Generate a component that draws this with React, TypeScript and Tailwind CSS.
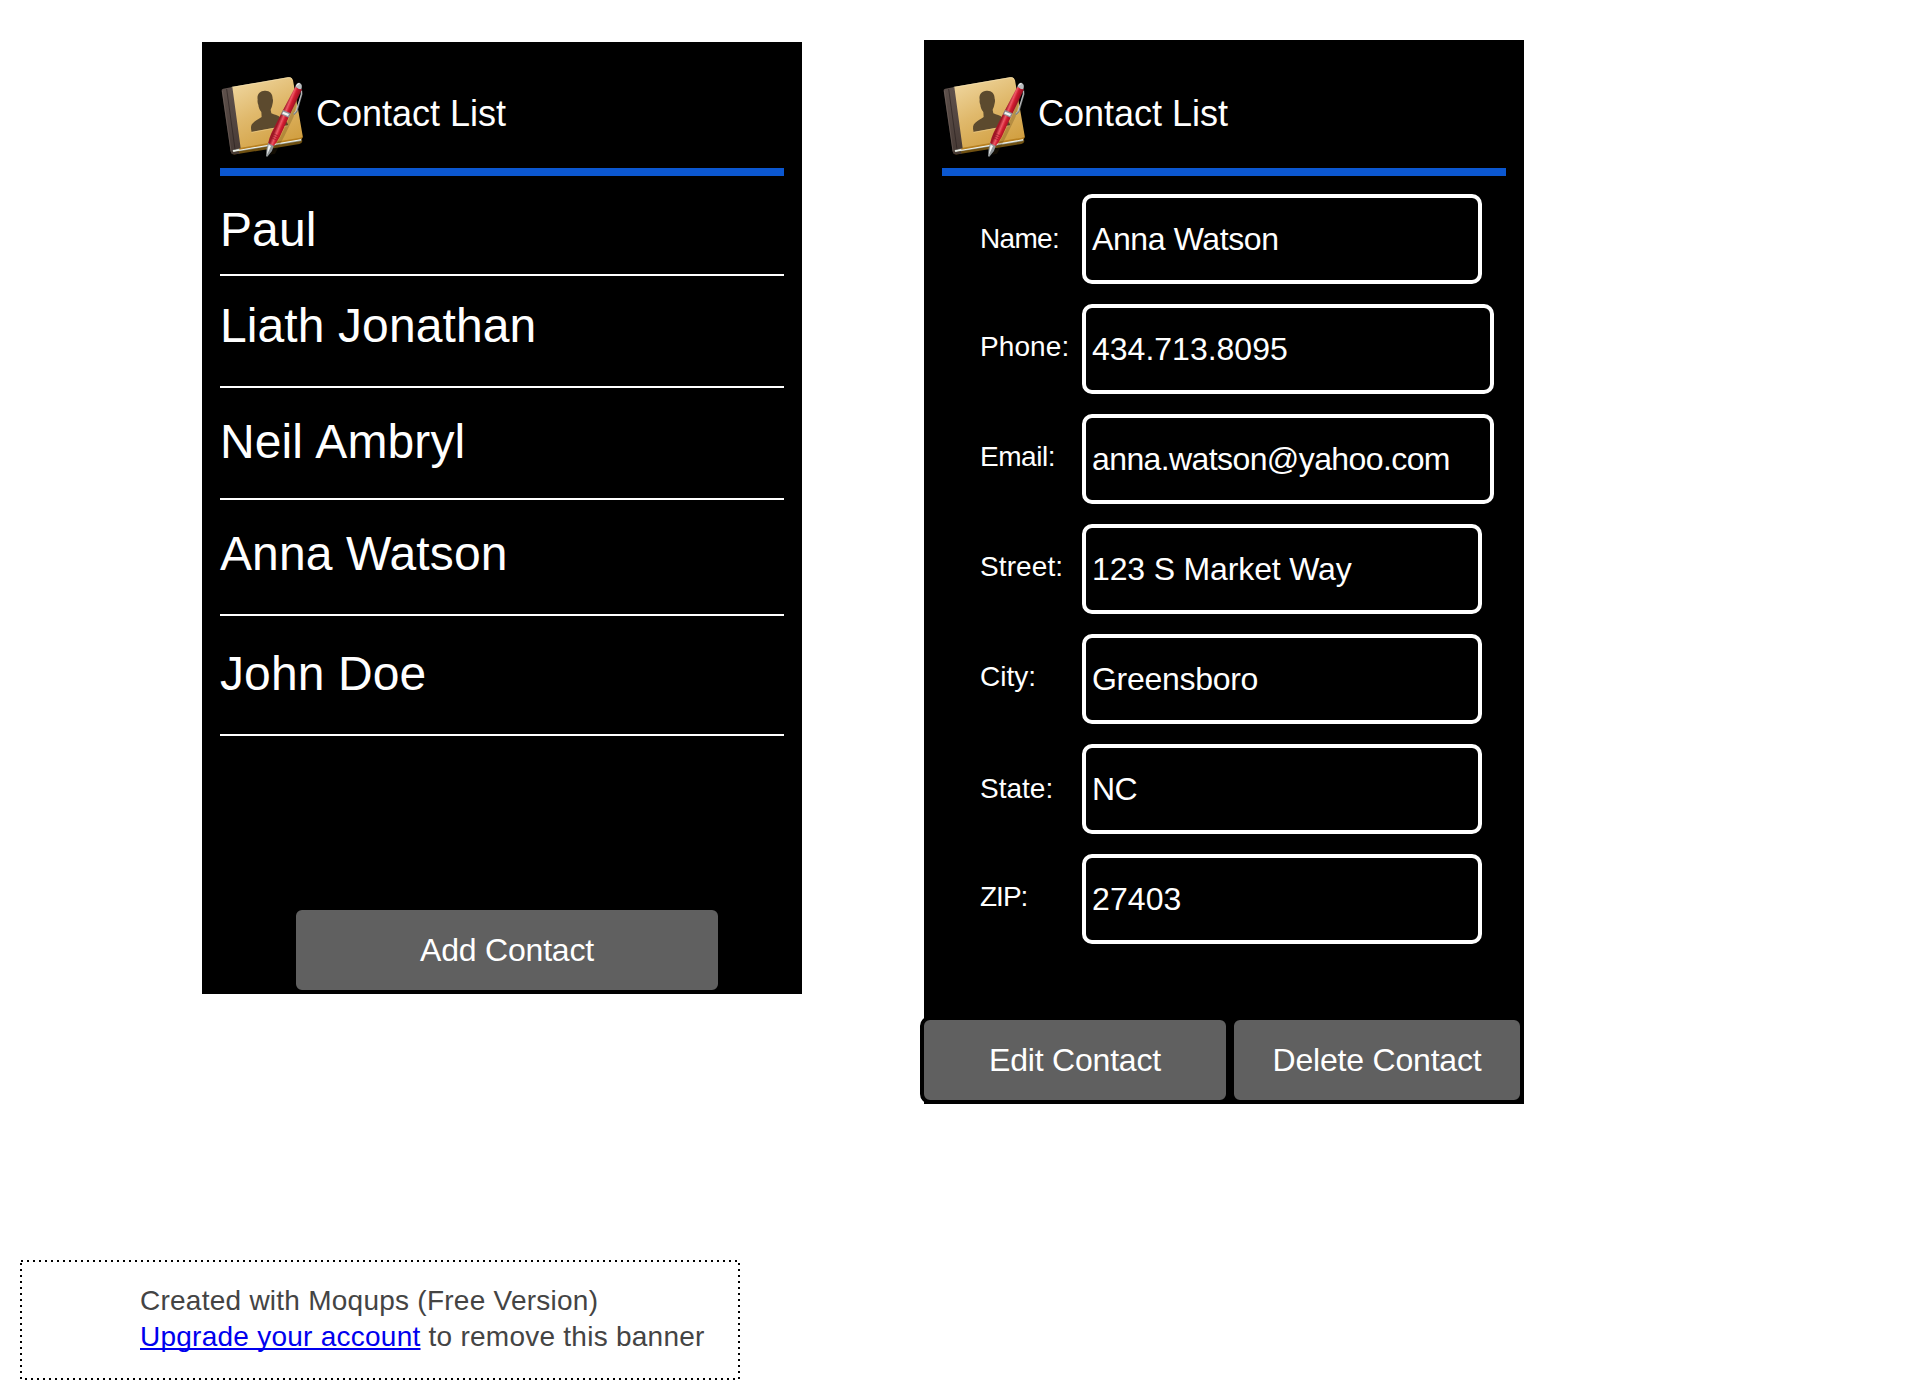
const contacts = [
  { name: "Paul", row: "h-[100px] pt-[27px]" },
  { name: "Liath Jonathan", row: "h-[112px] pt-[23px]" },
  { name: "Neil Ambryl", row: "h-[112px] pt-[27px] [word-spacing:1.5px]" },
  { name: "Anna Watson", row: "h-[116px] pt-[27px]" },
  { name: "John Doe", row: "h-[120px] pt-[31px]" },
];

const fields = [
  {
    label: "Name:",
    value: "Anna Watson",
    box: "w-[400px] tracking-[-0.4px]",
    caption: "pt-[29px] tracking-[-0.7px]",
  },
  { label: "Phone:", value: "434.713.8095", box: "w-[412px]", caption: "pt-[27px] tracking-[0.1px]" },
  {
    label: "Email:",
    value: "anna.watson@yahoo.com",
    box: "w-[412px] tracking-[-0.6px]",
    caption: "pt-[27px] tracking-[-0.45px]",
  },
  {
    label: "Street:",
    value: "123 S Market Way",
    box: "w-[400px] tracking-[-0.15px]",
    caption: "pt-[27px] tracking-[0.1px]",
  },
  { label: "City:", value: "Greensboro", box: "w-[400px] tracking-[-0.3px]", caption: "pt-[27px]" },
  { label: "State:", value: "NC", box: "w-[400px] tracking-[-0.6px]", caption: "pt-[29px]" },
  { label: "ZIP:", value: "27403", box: "w-[400px] tracking-[0.1px]", caption: "pt-[27px] tracking-[-1px]" },
];

function AddressBookIcon({ id }: { id: string }) {
  const cover = `cover-${id}`;
  const spine = `spine-${id}`;
  const pen = `pen-${id}`;
  return (
    <svg width="88" height="88" viewBox="60 42 264 264" className="shrink-0" aria-hidden="true">
      <defs>
        <linearGradient id={cover} x1="0.1" y1="0" x2="0.6" y2="1">
          <stop offset="0" stopColor="#f0d8a2" />
          <stop offset="0.5" stopColor="#e0b96c" />
          <stop offset="1" stopColor="#d2a042" />
        </linearGradient>
        <linearGradient id={spine} x1="0" y1="0" x2="0" y2="1">
          <stop offset="0" stopColor="#5e514c" />
          <stop offset="1" stopColor="#463934" />
        </linearGradient>
        <linearGradient id={pen} gradientUnits="userSpaceOnUse" x1="242" y1="170" x2="266" y2="180">
          <stop offset="0" stopColor="#a01626" />
          <stop offset="0.3" stopColor="#ee5a66" />
          <stop offset="0.55" stopColor="#d01c30" />
          <stop offset="1" stopColor="#9a1022" />
        </linearGradient>
      </defs>
      <path d="M92 272 L304 232 L307 244 Q306 250 298 252 L108 283 Q96 285 94 278Z" fill="#6f5011" />
      <path d="M94 267 L304 230 L304 243 L98 277Z" fill="#9ba19a" />
      <path d="M98 271 L303 235 L303 241 L100 275Z" fill="#eef1e9" />
      <path d="M94 81 L264 52 Q275 49 279 61 L308 227 Q309 234 301 236 L118 267Z" fill={`url(#${cover})`} />
      <path d="M118 264 L300 233 Q307 231 308 227 Q311 235 301 238 L118 269Z" fill="#b88020" />
      <path d="M96 82 L264 53 Q272 51 276 58" fill="none" stroke="#f6e3b2" strokeWidth="2" />
      <path d="M65 92 Q64 87 70 86 L97 81 L122 265 L98 270 L99 277 L117 274 L119 281 L100 283 Q94 283 92 275Z" fill={`url(#${spine})`} />
      <path d="M80 87 L105 268" stroke="#2a211f" strokeWidth="2" />
      <path d="M67 92 L93 274" stroke="#796b65" strokeWidth="1.5" />
      <path
        d="M173 119 C170 102 180 93 194 92 C208 91 218 99 218 116 C220 119 219 128 217 134 C216 142 212 146 212 150 L214 160 C223 164 234 166 242 173 C256 180 262 185 265 196 L155 216 C151 202 153 193 160 188 C168 180 179 176 185 171 L184 156 C178 149 176 142 175 134 C173 130 172 123 173 119Z"
        fill="#5c4a2e"
      />
      <path d="M155 217 L265 197" stroke="#f0cf8b" strokeWidth="2" />
      <path d="M302 82 L271 166 L242 229 L223 262 L210 284 L225 281 L253 229 L281 170Z" fill="#4b350d" opacity="0.25" />
      <path d="M304 92 L305 102 L290 154 L281 163" fill="none" stroke="#777b7c" strokeWidth="5" strokeLinejoin="round" />
      <path d="M304 92 L304 103 L288 154 L281 161" fill="none" stroke="#e5e7e8" strokeWidth="2" strokeLinejoin="round" />
      <path d="M286 80 L306 88 L269 166 L239 231 Q231 247 220 259 L204 251 Q207 236 214 220 L246 156Z" fill={`url(#${pen})`} />
      <path d="M286 80 Q289 68 298 68 Q309 72 304 88 Q296 88 286 80Z" fill="#b9bdbf" />
      <path d="M290 77 Q293 71 298 71" fill="none" stroke="#ffffff" strokeWidth="3" />
      <path d="M249 150 L272 160 L266 173 L243 163Z" fill="#8e9295" />
      <path d="M250 155 L267 162 L264 168 L247 161Z" fill="#f3f4f4" />
      <path d="M217 220 L235 228 M214 226 L232 234 M212 232 L229 240" stroke="#8f1422" strokeWidth="2" />
      <path d="M204 249 L221 258 L216 273 L202 290 L198 289 L200 266Z" fill="#8f9597" />
      <path d="M206 254 L213 258 L201 284 L203 268Z" fill="#f4f6f6" />
    </svg>
  );
}

function PanelHeader({ id }: { id: string }) {
  return (
    <header className="flex h-[102px] w-[564px] items-start border-b-8 border-[#0b57d0]">
      <AddressBookIcon id={id} />
      <h1 className="ml-2 mt-[19px] text-[36px] leading-[41px] whitespace-nowrap">Contact List</h1>
    </header>
  );
}

function ActionButton({ label, className }: { label: string; className: string }) {
  return (
    <button
      type="button"
      className={`h-[88px] shrink-0 rounded-[10px] border-4 border-black bg-[#606060] text-center text-[32px] leading-9 tracking-[-0.2px] whitespace-nowrap text-white ${className}`}
    >
      {label}
    </button>
  );
}

function ContactListPanel() {
  return (
    <section className="mt-[2px] flex h-[952px] w-[600px] flex-col bg-black pt-8 text-white">
      <div className="ml-[18px]">
        <PanelHeader id="list" />
        <ul className="w-[564px]">
          {contacts.map((contact) => (
            <li
              key={contact.name}
              className={`border-b-2 border-white text-[48px] leading-[53px] tracking-[0.1px] whitespace-nowrap ${contact.row}`}
            >
              {contact.name}
            </li>
          ))}
        </ul>
      </div>
      <ActionButton label="Add Contact" className="mt-auto ml-[90px] w-[430px]" />
    </section>
  );
}

function ContactDetailPanel() {
  return (
    <section className="flex h-[1064px] w-[600px] flex-col bg-black pt-[34px] text-white">
      <div className="ml-[18px]">
        <PanelHeader id="detail" />
      </div>
      <div className="mt-[18px] ml-14 flex flex-col gap-5">
        {fields.map((field) => (
          <div key={field.label} className="flex h-[90px] items-start">
            <span className={`w-[102px] text-[28px] leading-[31px] whitespace-nowrap ${field.caption}`}>
              {field.label}
            </span>
            <div
              className={`flex h-[90px] items-center rounded-[10px] border-4 border-white pl-[6px] text-[32px] leading-9 whitespace-nowrap ${field.box}`}
            >
              {field.value}
            </div>
          </div>
        ))}
      </div>
      <div className="mt-auto -ml-1 flex w-[604px]">
        <ActionButton label="Edit Contact" className="w-[310px]" />
        <ActionButton label="Delete Contact" className="w-[294px]" />
      </div>
    </section>
  );
}

function Banner() {
  return (
    <footer className="relative mt-[156px] ml-5 h-[120px] w-[720px] pt-[23px] pl-[120px] text-[28px] leading-9 tracking-[0.25px] whitespace-nowrap text-[#444444]">
      <svg className="pointer-events-none absolute inset-0" width="720" height="120" aria-hidden="true">
        <rect x="1" y="1" width="718" height="118" fill="none" stroke="#000000" strokeWidth="2" strokeDasharray="2 4" />
      </svg>
      <p>Created with Moqups (Free Version)</p>
      <p>
        <a
          href="#"
          className="text-[#0000ee] underline decoration-2 underline-offset-[2px] [text-decoration-skip-ink:none]"
        >
          Upgrade your account
        </a>{" "}
        to remove this banner
      </p>
    </footer>
  );
}

export default function App() {
  return (
    <main className="h-[1400px] w-[1920px] overflow-hidden bg-white pt-10 font-['Liberation_Sans',Arial,sans-serif]">
      <div className="ml-[202px] flex items-start gap-[122px]">
        <ContactListPanel />
        <ContactDetailPanel />
      </div>
      <Banner />
    </main>
  );
}
